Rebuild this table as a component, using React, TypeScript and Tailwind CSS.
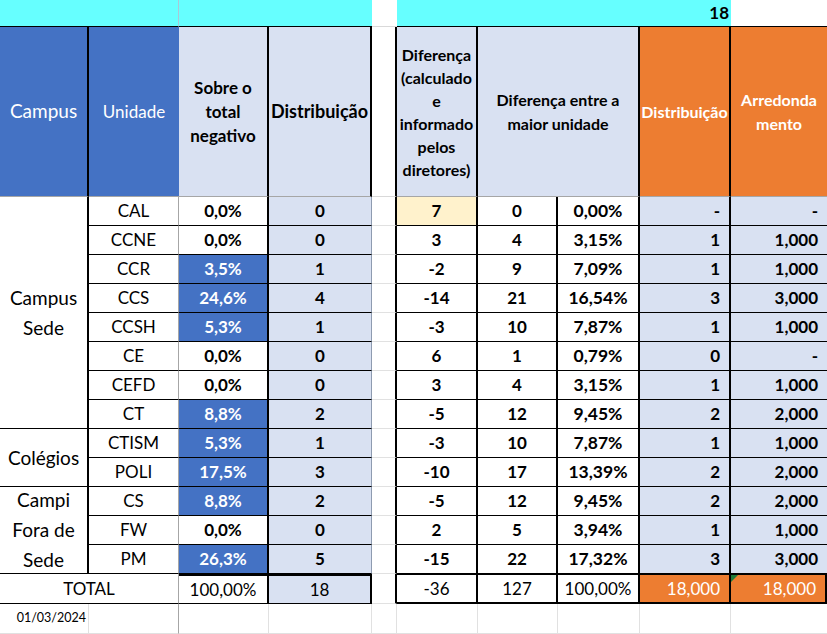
type Row = {
  u: string;
  s: string;
  hl: boolean;
  d: string;
  df: string;
  m: string;
  p: string;
  di: string;
  ar: string;
};

const rows: Row[] = [
  { u: "CAL", s: "0,0%", hl: false, d: "0", df: "7", m: "0", p: "0,00%", di: "-", ar: "-" },
  { u: "CCNE", s: "0,0%", hl: false, d: "0", df: "3", m: "4", p: "3,15%", di: "1", ar: "1,000" },
  { u: "CCR", s: "3,5%", hl: true, d: "1", df: "-2", m: "9", p: "7,09%", di: "1", ar: "1,000" },
  { u: "CCS", s: "24,6%", hl: true, d: "4", df: "-14", m: "21", p: "16,54%", di: "3", ar: "3,000" },
  { u: "CCSH", s: "5,3%", hl: true, d: "1", df: "-3", m: "10", p: "7,87%", di: "1", ar: "1,000" },
  { u: "CE", s: "0,0%", hl: false, d: "0", df: "6", m: "1", p: "0,79%", di: "0", ar: "-" },
  { u: "CEFD", s: "0,0%", hl: false, d: "0", df: "3", m: "4", p: "3,15%", di: "1", ar: "1,000" },
  { u: "CT", s: "8,8%", hl: true, d: "2", df: "-5", m: "12", p: "9,45%", di: "2", ar: "2,000" },
  { u: "CTISM", s: "5,3%", hl: true, d: "1", df: "-3", m: "10", p: "7,87%", di: "1", ar: "1,000" },
  { u: "POLI", s: "17,5%", hl: true, d: "3", df: "-10", m: "17", p: "13,39%", di: "2", ar: "2,000" },
  { u: "CS", s: "8,8%", hl: true, d: "2", df: "-5", m: "12", p: "9,45%", di: "2", ar: "2,000" },
  { u: "FW", s: "0,0%", hl: false, d: "0", df: "2", m: "5", p: "3,94%", di: "1", ar: "1,000" },
  { u: "PM", s: "26,3%", hl: true, d: "5", df: "-15", m: "22", p: "17,32%", di: "3", ar: "3,000" },
];

// campus groups keyed by first row index
const groups: Record<number, { span: string; lines: string[] }> = {
  0: { span: "row-span-8", lines: ["Campus", "Sede"] },
  8: { span: "row-span-2", lines: ["Colégios"] },
  10: { span: "row-span-3", lines: ["Campi", "Fora de", "Sede"] },
};

const center = "flex items-center justify-center text-center";
const right = "flex items-center justify-end pr-[9px]";

export default function App() {
  return (
    <div className="w-[827px] h-[634px] overflow-hidden bg-white font-['Lato',sans-serif] text-[17px] text-black">
      <div className="grid grid-cols-[89px_90px_90px_103px_25px_81px_80px_82px_91px_96px] grid-rows-[27px_170px_repeat(13,29px)_30px_30px]">
        {/* top strip */}
        <div className="col-span-2 bg-[#66ffff] border-r border-r-[#a9c7d6] border-b border-b-black" />
        <div className="col-span-2 bg-[#66ffff] border-b border-b-black" />
        <div className="bg-white border-b border-b-[#d9d9d9]" />
        <div className="col-span-4 bg-[#66ffff] border-b border-b-black flex items-center justify-end pr-[2px] font-bold">
          18
        </div>
        <div className="bg-white border-b border-b-black" />

        {/* header */}
        <div className={`${center} bg-[#4472c4] text-white text-[19px] border-r-2 border-r-black border-b border-b-[#a6a6a6]`}>
          Campus
        </div>
        <div className={`${center} bg-[#4472c4] text-white text-[17px] border-b border-b-[#a6a6a6]`}>
          Unidade
        </div>
        <div className={`${center} bg-[#d9e1f2] font-bold leading-[24px] border-r-2 border-r-black border-b border-b-[#a6a6a6]`}>
          Sobre o<br />total<br />negativo
        </div>
        <div className={`${center} bg-[#d9e1f2] font-bold text-[18px] border-r-2 border-r-black border-b border-b-[#a6a6a6]`}>
          Distribuição
        </div>
        <div className="bg-white border-r-2 border-r-black border-b border-b-[#d9d9d9]" />
        <div className={`${center} bg-[#d9e1f2] font-bold text-[16px] leading-[23px] border-r-2 border-r-black border-b border-b-[#a6a6a6]`}>
          Diferença
          <br />
          (calculado
          <br />e<br />
          informado
          <br />
          pelos
          <br />
          diretores)
        </div>
        <div className={`${center} col-span-2 bg-[#d9e1f2] font-bold text-[16px] leading-[24px] border-r-2 border-r-black border-b border-b-[#a6a6a6]`}>
          Diferença entre a<br />maior unidade
        </div>
        <div className={`${center} bg-[#ed7d31] text-white font-bold text-[16px] border-r-2 border-r-black border-b border-b-[#a6a6a6]`}>
          Distribuição
        </div>
        <div className={`${center} bg-[#ed7d31] text-white font-bold text-[16px] leading-[24px] border-b border-b-[#a6a6a6]`}>
          Arredonda
          <br />
          mento
        </div>

        {/* data rows */}
        {rows.map((r, i) => {
          const g = groups[i];
          return [
            g ? (
              <div
                key={`g${i}`}
                className={`${g.span} ${center} flex-col text-[19px] leading-[30px] bg-white border-r-2 border-r-black border-b border-b-black`}
              >
                {g.lines.map((l) => (
                  <span key={l}>{l}</span>
                ))}
              </div>
            ) : null,
            <div key={`u${i}`} className={`${center} bg-white border-r border-r-[#a6a6a6] border-b border-b-black`}>
              {r.u}
            </div>,
            <div
              key={`s${i}`}
              className={`${center} font-bold border-r-2 border-r-black border-b border-b-black ${
                r.hl ? "bg-[#4472c4] text-white" : "bg-white"
              }`}
            >
              {r.s}
            </div>,
            <div key={`d${i}`} className={`${center} font-bold bg-[#d9e1f2] border-r border-r-[#8e9bb0] border-b border-b-black`}>
              {r.d}
            </div>,
            <div key={`x${i}`} className="bg-white border-r-2 border-r-black border-b border-b-[#e1e1e1]" />,
            <div
              key={`f${i}`}
              className={`${center} font-bold border-r-2 border-r-black border-b border-b-black ${
                i === 0 ? "bg-[#fff2cc]" : "bg-white"
              }`}
            >
              {r.df}
            </div>,
            <div key={`m${i}`} className={`${center} font-bold bg-white border-r-2 border-r-black border-b border-b-black`}>
              {r.m}
            </div>,
            <div key={`p${i}`} className={`${center} font-bold text-[17.5px] bg-white border-r-2 border-r-black border-b border-b-black`}>
              {r.p}
            </div>,
            <div key={`i${i}`} className={`${right} font-bold bg-[#d9e1f2] border-r-2 border-r-black border-b border-b-black`}>
              {r.di}
            </div>,
            <div key={`a${i}`} className={`${right} font-bold bg-[#d9e1f2] border-b border-b-black`}>
              {r.ar}
            </div>,
          ];
        })}

        {/* total row */}
        <div className={`${center} col-span-2 bg-white border-r border-r-[#a6a6a6] border-b border-b-black`}>TOTAL</div>
        <div className={`${center} bg-white border-t-2 border-t-black border-r-2 border-r-black border-b border-b-black`}>
          100,00%
        </div>
        <div className={`${center} bg-[#d9e1f2] border-t-2 border-t-black border-r-2 border-r-black border-b border-b-black`}>
          18
        </div>
        <div className="bg-white border-r-2 border-r-black border-b border-b-[#e1e1e1]" />
        <div className={`${center} bg-white border-t border-t-black border-r-2 border-r-black border-b-2 border-b-black`}>-36</div>
        <div className={`${center} bg-white border-t border-t-black border-r-2 border-r-black border-b-2 border-b-black`}>127</div>
        <div className={`${center} bg-white border-t border-t-black border-r-2 border-r-black border-b-2 border-b-black`}>
          100,00%
        </div>
        <div className={`${right} bg-[#ed7d31] text-white border-t border-t-black border-r-2 border-r-black border-b-2 border-b-black`}>
          18,000
        </div>
        <div className={`${right} relative bg-[#ed7d31] text-white border-t border-t-black border-r-2 border-r-black border-b-2 border-b-black`}>
          <span className="absolute left-0 top-0 w-0 h-0 border-t-[7px] border-t-[#1f7a3a] border-r-[7px] border-r-transparent" />
          18,000
        </div>

        {/* date row */}
        <div className="flex items-center justify-end pr-[2px] text-[12.5px] bg-white border-r border-r-[#e1e1e1] border-b border-b-[#e1e1e1]">
          01/03/2024
        </div>
        <div className="bg-white border-r border-r-[#a6a6a6] border-b border-b-[#e1e1e1]" />
        <div className="bg-white border-r border-r-[#e1e1e1] border-b border-b-[#e1e1e1]" />
        <div className="bg-white border-r border-r-[#e1e1e1] border-b border-b-[#e1e1e1]" />
        <div className="bg-white border-r border-r-[#e1e1e1] border-b border-b-[#e1e1e1]" />
        <div className="bg-white border-r border-r-[#e1e1e1] border-b border-b-[#e1e1e1]" />
        <div className="bg-white border-r border-r-[#e1e1e1] border-b border-b-[#e1e1e1]" />
        <div className="bg-white border-r border-r-[#e1e1e1] border-b border-b-[#e1e1e1]" />
        <div className="bg-white border-r border-r-[#e1e1e1] border-b border-b-[#e1e1e1]" />
        <div className="bg-white border-b border-b-[#e1e1e1]" />
      </div>
    </div>
  );
}
